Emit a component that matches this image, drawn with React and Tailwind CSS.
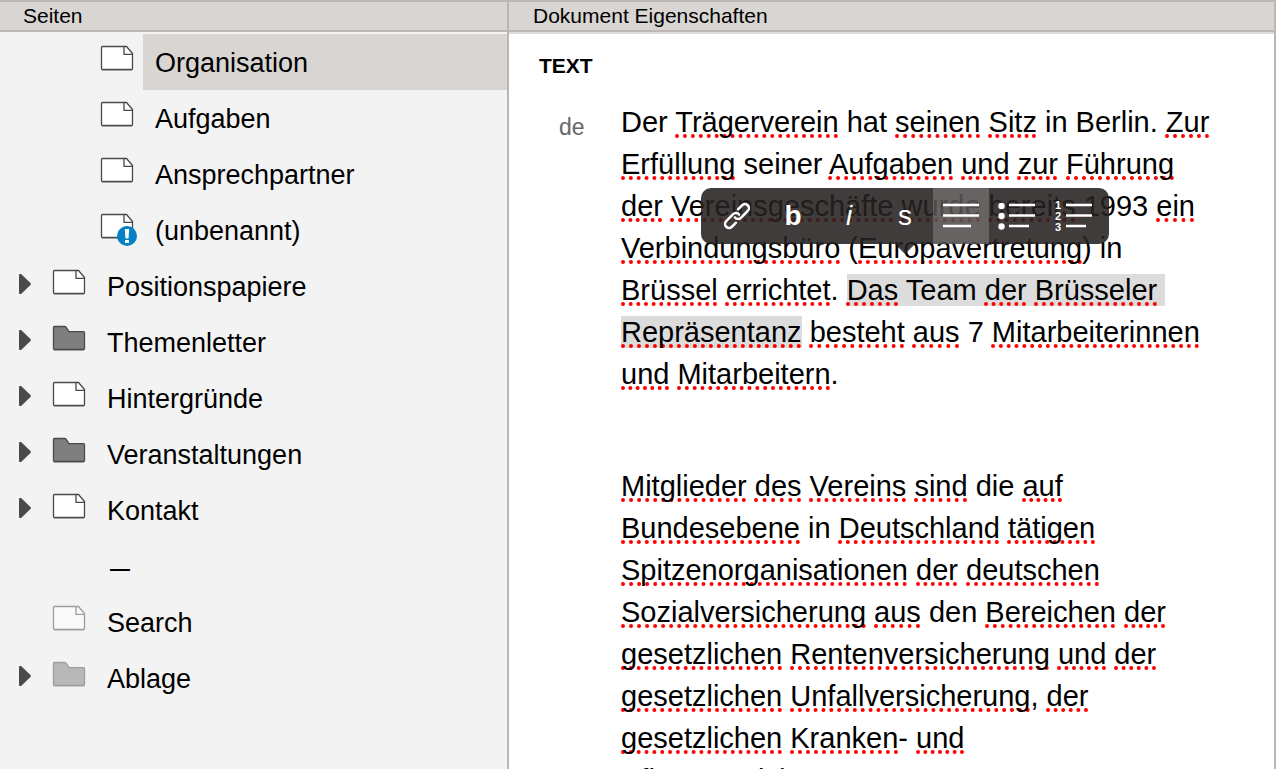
import React from "react";

const FONT = "font-['Liberation_Sans',Arial,sans-serif]";

function PageIcon() {
  return (
    <svg width="34" height="28" viewBox="0 0 34 28" aria-hidden="true">
      <path d="M2 25.5h30" stroke="#000" strokeOpacity=".2" />
      <path d="M2.500 1.500H26.500L32.500 8.500V23.500Q32.500 24.500 31.500 24.500H2.500Q1.500 24.500 1.500 23.500V2.500Q1.500 1.500 2.500 1.500Z" fill="#fff" stroke="#4a4a4a" strokeWidth="1.300" />
      <path d="M24 1.500V9.300H32.500" fill="none" stroke="#4a4a4a" strokeWidth="1.300" />
    </svg>
  );
}

function FolderIcon() {
  return (
    <svg width="34" height="28" viewBox="0 0 34 28" aria-hidden="true">
      <path d="M2 25.5h30" stroke="#000" strokeOpacity=".2" />
      <path d="M2.500 1.500H12.500Q13.500 1.500 14 2.200L17 6.700H31.500Q32.500 6.700 32.500 7.700V23.500Q32.500 24.500 31.500 24.500H2.500Q1.500 24.500 1.500 23.500V2.500Q1.500 1.500 2.500 1.500Z" fill="#7f7f7f" stroke="#4a4a4a" strokeWidth="1.300" />
    </svg>
  );
}

function AlertBadge() {
  return (
    <svg width="20" height="20" viewBox="0 0 20 20" aria-hidden="true">
      <circle cx="10" cy="10" r="10" fill="#0580c4" />
      <path d="M7.800 3h4.400l-.7 9.500h-3z" fill="#fff" />
      <rect x="8" y="14" width="4" height="3" rx=".6" fill="#fff" />
    </svg>
  );
}

const PAGES = [
  { label: "Organisation", nested: true, icon: "page", selected: true },
  { label: "Aufgaben", nested: true, icon: "page" },
  { label: "Ansprechpartner", nested: true, icon: "page" },
  { label: "(unbenannt)", nested: true, icon: "page", alert: true },
  { label: "Positionspapiere", icon: "page", children: true },
  { label: "Themenletter", icon: "folder", children: true },
  { label: "Hintergründe", icon: "page", children: true },
  { label: "Veranstaltungen", icon: "folder", children: true },
  { label: "Kontakt", icon: "page", children: true },
  { label: "—", separator: true },
  { label: "Search", icon: "page", faded: true },
  { label: "Ablage", icon: "folder", faded: true, children: true },
];

function TreeRow({ page }) {
  return (
    <li className={`flex h-14 ${page.nested ? "pl-12" : ""}`}>
      <span className="w-[52px] shrink-0 pl-[19px] pt-[15px]">
        {page.children && (
          <button type="button" aria-label={`${page.label} aufklappen`} className="block">
            <svg width="13" height="22" viewBox="0 0 13 22" aria-hidden="true">
              <path d="M0 1.800Q0 1 .9 1H1.800Q2.300 1 2.700 1.400L11.700 10.200Q12.300 11 11.700 11.800L2.700 20.600Q2.300 21 1.800 21H.9Q0 21 0 20.200z" fill="#4a4a4a" />
            </svg>
          </button>
        )}
      </span>
      <span className={`relative w-[43px] shrink-0 pt-[11px] ${page.faded ? "opacity-50" : ""}`}>
        {page.icon === "page" && <PageIcon />}
        {page.icon === "folder" && <FolderIcon />}
        {page.alert && (
          <span className="absolute left-[17px] top-6">
            <AlertBadge />
          </span>
        )}
      </span>
      {page.separator ? (
        <span className="pl-[15px] text-[20px] font-bold leading-[60px]">{page.label}</span>
      ) : (
        <a
          href="#"
          className={`min-w-0 flex-1 truncate pl-3 pt-px text-[27px] leading-[56px] ${page.selected ? "bg-[#d9d5d2]" : ""}`}
        >
          {page.label}
        </a>
      )}
    </li>
  );
}

function S({ children }) {
  return (
    <span className="underline decoration-[#ff0000] decoration-dotted decoration-4 underline-offset-2 [text-decoration-skip-ink:none]">
      {children}
    </span>
  );
}

function Tool({ label, active, children }) {
  return (
    <button
      type="button"
      aria-label={label}
      className={`flex h-14 w-14 items-center justify-center ${active ? "bg-white/20" : ""}`}
    >
      {children}
    </button>
  );
}

function Toolbar() {
  return (
    <div
      role="toolbar"
      aria-label="Textformatierung"
      className="absolute left-20 top-[87px] flex rounded-[10px] bg-[#252120]/88 px-2 text-[28px] leading-[56px] text-white"
    >
      <Tool label="Link">
        <svg width="28" height="28" viewBox="0 0 28 28" fill="none" stroke="#fff" strokeWidth="2.500" strokeLinecap="round" aria-hidden="true">
          <g transform="rotate(-45 14 14)">
            <path d="M8.500 18H2.800A4 4 0 0 1 2.800 10H12.500A4 4 0 0 1 16.500 14.500" />
            <path d="M19.500 10H25.200A4 4 0 0 1 25.200 18H15.500A4 4 0 0 1 11.500 13.500" />
          </g>
        </svg>
      </Tool>
      <Tool label="Fett"><b>b</b></Tool>
      <Tool label="Kursiv"><i>i</i></Tool>
      <Tool label="Klein">s</Tool>
      <Tool label="Absatz" active>
        <svg width="36" height="26" viewBox="0 0 36 26" aria-hidden="true">
          <path d="M0 2h36M0 12.500h36M0 23h28" stroke="#fff" strokeWidth="2.500" />
        </svg>
      </Tool>
      <Tool label="Aufzählung">
        <svg width="38" height="28" viewBox="0 0 38 28" aria-hidden="true">
          <path d="M11 3h26M11 13.500h26M11 24h20" stroke="#fff" strokeWidth="2.500" />
          <circle cx="3.500" cy="4" r="3.200" fill="#fff" />
          <circle cx="3.500" cy="14" r="3.200" fill="#fff" />
          <circle cx="3.500" cy="24.500" r="3.200" fill="#fff" />
        </svg>
      </Tool>
      <Tool label="Nummerierung">
        <span className="flex items-center gap-1">
          <span className="w-[7px] text-[11px] font-bold leading-[11px]">1<br />2<br />3</span>
          <svg width="26" height="26" viewBox="0 0 26 26" aria-hidden="true">
            <path d="M0 2h26M0 12.500h26M0 23h20" stroke="#fff" strokeWidth="2.500" />
          </svg>
        </span>
      </Tool>
      <svg className="absolute left-1/2 top-full -translate-x-1/2" width="20" height="10" viewBox="0 0 20 10" aria-hidden="true">
        <path d="M0 0h20L11 9Q10 10 9 9z" fill="#252120" fillOpacity=".88" />
      </svg>
    </div>
  );
}

export default function App() {
  return (
    <div className={`${FONT} flex h-screen overflow-hidden border-t-2 border-[#bcb7b4] text-black`}>
      <nav aria-label="Seiten" className="w-[509px] shrink-0 overflow-hidden border-r-2 border-[#bcb7b4] bg-[#f3f3f3]">
        <h2 className="h-[30px] border-b-2 border-[#bcb7b4] bg-[#d9d5d2] pl-[23px] text-[21px] leading-7">Seiten</h2>
        <ul className="pt-[2px]">
          {PAGES.map((page) => (
            <TreeRow key={page.label} page={page} />
          ))}
        </ul>
      </nav>
      <main className="min-w-0 flex-1 overflow-hidden border-r-2 border-[#bcb7b4] bg-white">
        <h2 className="h-[30px] border-b-2 border-[#bcb7b4] bg-[#d9d5d2] pl-6 text-[21px] leading-7">Dokument Eigenschaften</h2>
        <section className="border-t-2 border-[#dedad8] pl-[30px] pt-5">
          <h3 className="text-[21px] font-bold leading-6">TEXT</h3>
          <div className="flex pt-[23px]">
            <span id="lang" className="w-[82px] shrink-0 pl-5 pt-3 text-[23px] leading-7 text-[#666]">de</span>
            <div className="relative flex-1 whitespace-nowrap text-[29px] leading-[42px]">
              <div role="textbox" aria-multiline="true" aria-labelledby="lang" contentEditable suppressContentEditableWarning spellCheck={false} className="outline-none">
                <p>
                  Der <S>Trägerverein</S> hat <S>seinen</S> <S>Sitz</S> in Berlin. <S>Zur</S><br />
                  <S>Erfüllung</S> seiner <S>Aufgaben</S> <S>und</S> <S>zur</S> <S>Führung</S><br />
                  <S>der</S> <S>Vereinsgeschäfte</S> <S>wurde</S> <S>bereits</S> 1993 <S>ein</S><br />
                  <S>Verbindungsbüro</S> (<S>Europavertretung</S>) in<br />
                  <S>Brüssel</S> <S>errichtet</S>. <mark className="bg-[#dcdcdc] text-black"><S>Das</S> Team <S>der</S> <S>Brüsseler</S>&nbsp;<br />
                  <S>Repräsentanz</S></mark> <S>besteht</S> <S>aus</S> 7 <S>Mitarbeiterinnen</S><br />
                  <S>und</S> <S>Mitarbeitern</S>.
                </p>
                <p className="pt-[70px]">
                  <S>Mitglieder</S> <S>des</S> <S>Vereins</S> <S>sind</S> die <S>auf</S><br />
                  <S>Bundesebene</S> in <S>Deutschland</S> <S>tätigen</S><br />
                  <S>Spitzenorganisationen</S> <S>der</S> <S>deutschen</S><br />
                  <S>Sozialversicherung</S> <S>aus</S> den <S>Bereichen</S> <S>der</S><br />
                  <S>gesetzlichen</S> <S>Rentenversicherung</S> <S>und</S> <S>der</S><br />
                  <S>gesetzlichen</S> <S>Unfallversicherung</S>, <S>der</S><br />
                  <S>gesetzlichen</S> <S>Kranken</S>- <S>und</S><br />
                  <S>Pflegeversicherung</S>
                </p>
              </div>
              <Toolbar />
            </div>
          </div>
        </section>
      </main>
    </div>
  );
}
